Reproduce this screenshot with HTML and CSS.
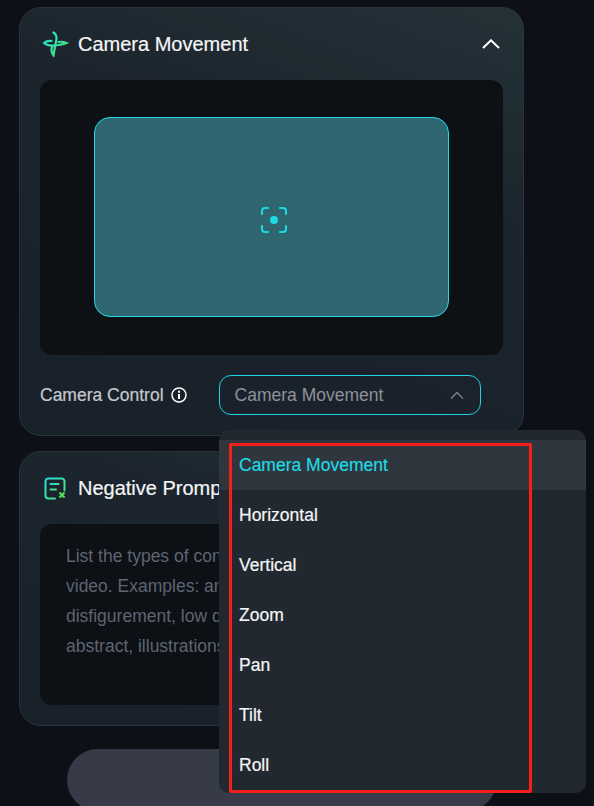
FILE: index.html
```html
<!DOCTYPE html>
<html lang="en">
<head>
<meta charset="utf-8">
<title>Camera Movement</title>
<link rel="stylesheet" href="styles.css">
</head>
<body>
<main class="page">
  <section class="card card-camera">
    <header class="card-head">
      <svg class="head-icon" width="26" height="26" viewBox="0 0 26 26" fill="none" aria-hidden="true">
        <defs><linearGradient id="g1" gradientUnits="userSpaceOnUse" x1="2" y1="4" x2="20" y2="24"><stop offset="0" stop-color="#1fe0d8"/><stop offset="1" stop-color="#4fe070"/></linearGradient></defs>
        <path d="M1 12C3.500 10 6 9.500 8.500 10M1 12C4 14.500 8 15 12 14.500C16 14 20 13.500 23.500 12C20.500 10.700 18 10.500 15.500 11" stroke="url(#g1)" stroke-width="2.200" stroke-linecap="round"/>
        <path d="M10.500 1.500C13.500 3.500 14 7 13 10.500C12 14.500 11.500 19 10.500 24.500C8.500 22 8 19 9 16" stroke="url(#g1)" stroke-width="2.200" stroke-linecap="round"/>
      </svg>
      <h2 class="card-title">Camera Movement</h2>
      <svg class="head-chevron" width="18" height="10" viewBox="0 0 18 10" fill="none" aria-hidden="true"><path d="M1 9L9 1.300L17 9" stroke="#fff" stroke-width="2"/></svg>
    </header>
    <div class="preview">
      <div class="frame">
        <svg width="26" height="26" viewBox="0 0 26 26" fill="none" aria-hidden="true">
          <path d="M1 7V4A3 3 0 0 1 4 1H7M19 1H22A3 3 0 0 1 25 4V7M25 19V22A3 3 0 0 1 22 25H19M7 25H4A3 3 0 0 1 1 22V19" stroke="#1cdbe8" stroke-width="2" stroke-linecap="round"/>
          <circle cx="13" cy="13" r="4" fill="#1cdbe8"/>
        </svg>
      </div>
    </div>
    <div class="control-row">
      <span class="control-label">Camera Control</span>
      <svg class="info" width="16" height="16" viewBox="0 0 16 16" fill="none" aria-hidden="true">
        <circle cx="8" cy="8" r="7" stroke="#fff" stroke-width="1.500"/>
        <path d="M8 7V12" stroke="#fff" stroke-width="2"/>
        <rect x="7" y="3.700" width="2" height="2" fill="#fff"/>
      </svg>
      <div class="select">
        <span>Camera Movement</span>
        <svg width="14" height="8" viewBox="0 0 14 8" fill="none" aria-hidden="true"><path d="M1 7.500L7 1.500L13 7.500" stroke="#7f848c" stroke-width="1.300"/></svg>
      </div>
    </div>
  </section>

  <section class="card card-negative">
    <header class="card-head">
      <svg class="head-icon" width="26" height="26" viewBox="0 0 26 26" fill="none" aria-hidden="true">
        <defs><linearGradient id="g2" x1="0" y1="0" x2="1" y2="1"><stop offset="0" stop-color="#1fe0d8"/><stop offset="1" stop-color="#4fe070"/></linearGradient></defs>
        <path d="M12 23.500H5A3 3 0 0 1 2.500 20.500V6A3 3 0 0 1 5 3.500H19A3 3 0 0 1 21.500 6V15.500" stroke="url(#g2)" stroke-width="2" stroke-linecap="round"/>
        <path d="M7.500 9H15.500M7.500 14.500H13" stroke="url(#g2)" stroke-width="2" stroke-linecap="round"/>
        <path d="M16.500 17.500L21.500 22.500M21.500 17.500L16.500 22.500" stroke="#52e05a" stroke-width="2.200"/>
      </svg>
      <h2 class="card-title">Negative Prompt</h2>
    </header>
    <div class="prompt">List the types of content you don't want to see in the video. Examples: animation, blur, distortion, disfigurement, low quality, collage, grainy, logo, abstract, illustrations, computer-generated, distorted</div>
  </section>

  <div class="submit"></div>

  <ul class="menu">
    <li class="menu-item is-active">Camera Movement</li>
    <li class="menu-item">Horizontal</li>
    <li class="menu-item">Vertical</li>
    <li class="menu-item">Zoom</li>
    <li class="menu-item">Pan</li>
    <li class="menu-item">Tilt</li>
    <li class="menu-item">Roll</li>
  </ul>
  <div class="highlight"></div>
</main>
</body>
</html>
```

FILE: styles.css
```css
* { box-sizing: border-box; }

html, body {
  margin: 0;
  height: 100%;
  background: #0d1117;
  overflow: hidden;
}

body {
  font-family: "Liberation Sans", Arial, sans-serif;
  color: #fff;
}

.page {
  position: relative;
  width: 594px;
  height: 806px;
  overflow: hidden;
  padding: 7px 70px 0 19px;
  display: flex;
  flex-direction: column;
  gap: 15px;
}

.card {
  flex: none;
  border: 1px solid #2b343c;
  border-radius: 22px;
  background: linear-gradient(200deg, #243238 0%, #1c252d 35%, #18202a 100%);
  padding: 0 20px;
}

.card-camera { height: 429px; }
.card-negative { height: 275px; }

.card-head {
  height: 72px;
  display: flex;
  align-items: center;
  gap: 9px;
  padding-left: 3px;
}

.head-icon { flex: none; }

.card-title {
  margin: 0;
  flex: 1;
  font-size: 20px;
  font-weight: 400;
  color: #f4f5f6;
  white-space: nowrap;
  -webkit-text-stroke: 0.2px #f4f5f6;
}

.head-chevron { margin-right: 3px; }

.preview {
  height: 275px;
  border-radius: 12px;
  background: #0d1116;
  padding: 37px 54px 38px;
}

.frame {
  height: 200px;
  border: 1px solid #22dbe6;
  border-radius: 16px;
  background: #2f666f;
  padding: 6px 0 0 5px;
  display: flex;
  align-items: center;
  justify-content: center;
}

.control-row {
  margin-top: 20px;
  display: flex;
  align-items: center;
  height: 40px;
}

.control-label {
  font-size: 17.500px;
  color: #c5c8cc;
  white-space: nowrap;
  -webkit-text-stroke: 0.2px #c5c8cc;
}

.info { margin-left: 7px; flex: none; }

.select {
  margin-left: 32px;
  width: 262px;
  height: 40px;
  border: 1px solid #1fd5e0;
  border-radius: 12px;
  padding: 0 16px 0 15px;
  display: flex;
  align-items: center;
  justify-content: space-between;
  font-size: 17.500px;
  color: #8e9299;
}

.prompt {
  height: 181px;
  border-radius: 12px;
  background: #0d1116;
  padding: 17px 26px 0;
  font-size: 17.500px;
  line-height: 30px;
  color: #5f6472;
}

.submit {
  flex: none;
  width: 430px;
  height: 62px;
  margin: 8px 0 0 48px;
  border-radius: 31px;
  background: #363b47;
}

.menu {
  position: absolute;
  left: 219px;
  top: 430px;
  width: 367px;
  height: 363px;
  margin: 0;
  padding: 10px 0 0;
  list-style: none;
  border-radius: 10px;
  background: #212830;
}

.menu-item {
  height: 50px;
  padding-left: 20px;
  display: flex;
  align-items: center;
  font-size: 17.500px;
  color: #f4f5f6;
  -webkit-text-stroke: 0.2px #f4f5f6;
}

.menu-item.is-active {
  background: #2f363e;
  color: #1fd9e4;
  -webkit-text-stroke: 0.2px #1fd9e4;
}

.highlight {
  position: absolute;
  left: 229px;
  top: 443px;
  width: 303px;
  height: 350px;
  border: 3px solid #f5201a;
  border-radius: 2px;
}
```
